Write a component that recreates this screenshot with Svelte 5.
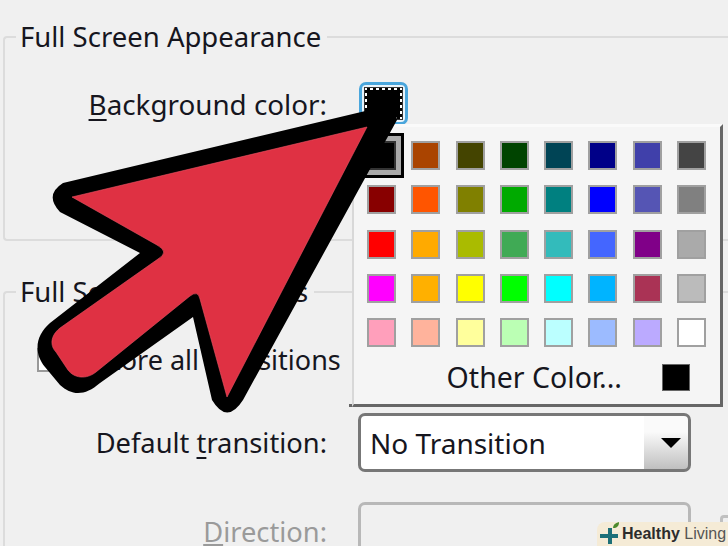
<script>
  const palette = [
    ['#000000', '#aa4400', '#444400', '#004400', '#004455', '#000088', '#4040aa', '#444444'],
    ['#880000', '#ff5500', '#808000', '#00aa00', '#008080', '#0000ff', '#5555b4', '#808080'],
    ['#ff0000', '#ffaa00', '#aabb00', '#40aa55', '#33bbbb', '#4466ff', '#800088', '#aaaaaa'],
    ['#ff00ff', '#ffb000', '#ffff00', '#00ff00', '#00ffff', '#00b4ff', '#aa3355', '#bbbbbb'],
    ['#ff9fbb', '#ffb39c', '#ffff9c', '#bbffb4', '#bbffff', '#9cbbff', '#bbaaff', '#ffffff']
  ];
</script>

<div class="page">
  <fieldset class="group first">
    <legend>Full Screen Appearance</legend>
    <div class="row">
      <span class="label bg-label"><u>B</u>ackground color:</span>
      <div class="color-btn"><div class="color-inner"></div></div>
    </div>
  </fieldset>

  <fieldset class="group second">
    <legend>Full Screen Transitions</legend>
    <div class="check-row">
      <span class="check"></span>
      <span>Restore all transitions</span>
    </div>
    <div class="row select-row">
      <span class="label default-label">Default <u>t</u>ransition:</span>
      <div class="select">
        <span class="select-text">No Transition</span>
        <span class="select-arrow"></span>
      </div>
    </div>
    <div class="row dir-row">
      <span class="label disabled"><u>D</u>irection:</span>
      <div class="input"></div>
      <div class="side-box"></div>
    </div>
  </fieldset>

  <div class="popup">
    <div class="swatches">
      {#each palette as row, r}
        {#each row as color, c}
          <div class="cell" class:selected={r === 0 && c === 0}>
            <div class="swatch" style="background:{color}"></div>
          </div>
        {/each}
      {/each}
    </div>
    <div class="other">
      <span>Other Color...</span>
      <div class="other-swatch"></div>
    </div>
  </div>

  <svg class="arrow" width="728" height="546" viewBox="0 0 728 546">
    <path fill="#000" d="M63 183 L378 108 Q396 104 397 120 L243 400 Q227 425 212 400 L193 317 L100 383 C85 396 72 396 60 385 L45 367 C33 352 36 335 50 323 L140 253 L60 212 Q44 195 63 183 Z" />
    <path fill="#df3143" stroke="#ee5566" stroke-width="0.6" d="M367 127 L72 197 L157 245 Q170 252 158 259 L60 328 C50 336 50 346 56 352 L68 370 C74 378 86 380 96 372 L190 296 Q198 290 200 299 L227 397 Z" />
  </svg>

  <div class="logo">
    <svg width="22" height="24" viewBox="0 0 22 24">
      <path fill="#1d7078" d="M1 12h8V6h4v6h6v4h-6v6H9v-6H1z" />
      <path fill="#4d8a2c" d="M14 6c0-3 2-5 6-6 0 4-2 6-6 6z" />
    </svg>
    <span class="logo-text"><b>Healthy</b> Living</span>
  </div>
</div>

<style>
  :global(body) {
    margin: 0;
    background: #f0f0f0;
  }

  .page {
    position: relative;
    width: 728px;
    height: 546px;
    overflow: hidden;
    background: #f0f0f0;
    color: #16161e;
    font-family: "Noto Sans", "Open Sans", sans-serif;
    font-size: 27px;
  }

  .group {
    margin: 0 -20px 0 3px;
    padding: 0;
    border: 0;
    border-top: 2px solid #dcdcdc;
    border-left: 2px solid #dcdcdc;
    border-bottom: 2px solid #dcdcdc;
    border-radius: 4px 0 0 4px;
    box-sizing: border-box;
  }

  .group legend {
    margin-left: 11px;
    padding: 0 6px 0 4px;
    line-height: 36px;
    font-size: 27.5px;
  }

  .first {
    height: 222px;
    margin-top: 19px;
  }

  .second {
    margin-top: 33px;
    height: 300px;
  }

  .row {
    display: grid;
    grid-template-columns: 322px auto;
    column-gap: 31px;
    align-items: center;
  }

  .label {
    text-align: right;
    line-height: 36px;
  }

  .bg-label {
    font-size: 27.8px;
  }

  .default-label {
    font-size: 27.3px;
  }

  .label u {
    text-underline-offset: 4px;
  }

  .disabled {
    color: #9a9a9a;
    font-size: 27.3px;
    line-height: 28px;
  }

  .disabled u {
    text-underline-offset: 2px;
  }

  .first .row {
    margin-top: 27px;
  }

  .color-btn {
    width: 49px;
    height: 43px;
    margin-left: 1px;
    box-sizing: border-box;
    border: 3px solid #4aa6dc;
    border-radius: 7px;
    padding: 2px;
    background: #e8f3fa;
  }

  .color-inner {
    height: 100%;
    box-sizing: border-box;
    background: #000;
    border: 3px dotted #fff;
    outline: 1px solid #333;
    outline-offset: -1px;
  }

  .check-row {
    display: flex;
    align-items: center;
    gap: 5px;
    margin: 32px 0 0 32px;
    line-height: 36px;
    white-space: nowrap;
  }

  .check {
    width: 20px;
    height: 20px;
    border: 2px solid #999;
    background: #fff;
  }

  .select-row {
    margin-top: 35px;
  }

  .select {
    display: flex;
    align-items: center;
    justify-content: space-between;
    width: 333px;
    height: 59px;
    box-sizing: border-box;
    border: 3px solid #777;
    border-radius: 7px;
    background: linear-gradient(to right, #fff 0 283px, transparent 283px),
      linear-gradient(to bottom, #fafafa 30%, #c0c0c0);
    padding-left: 9px;
    font-size: 28px;
  }

  .select-arrow {
    width: 0;
    height: 0;
    margin-right: 7px;
    border-left: 10px solid transparent;
    border-right: 10px solid transparent;
    border-top: 10px solid #000;
  }

  .dir-row {
    margin-top: 30px;
    align-items: start;
    grid-template-columns: 322px 333px auto;
  }

  .dir-row .label {
    margin-top: 16px;
  }

  .input {
    height: 60px;
    box-sizing: border-box;
    border: 3px solid #b8b8b8;
    border-radius: 7px;
  }

  .side-box {
    width: 30px;
    height: 40px;
    margin: 13px 0 0 -2px;
    box-sizing: border-box;
    border: 3px solid #c0c0c0;
    border-radius: 4px;
  }

  .popup {
    position: absolute;
    left: 352px;
    top: 124px;
    width: 371px;
    height: 283px;
    box-sizing: border-box;
    padding: 14px 0 0 13px;
    background: #f5f5f5;
    border-top: 3px solid #fafafa;
    border-left: 2px solid #d8d8d8;
    border-right: 3px solid #666;
    border-bottom: 3px solid #666;
  }

  .popup::after {
    content: "";
    position: absolute;
    left: -5px;
    bottom: -3px;
    width: 3px;
    height: 3px;
    background: #666;
  }

  .swatches {
    display: grid;
    grid-template-columns: repeat(8, 29px);
    grid-auto-rows: 29px;
    column-gap: 15.3px;
    row-gap: 15.3px;
  }

  .cell {
    position: relative;
  }

  .swatch {
    width: 100%;
    height: 100%;
    box-sizing: border-box;
    border: 2px solid #a0a0a0;
  }

  .selected::before {
    content: "";
    position: absolute;
    left: -8px;
    top: -8px;
    width: 45px;
    height: 45px;
    box-sizing: border-box;
    border: 3px solid #000;
    background: #aaa;
  }

  .selected .swatch {
    position: relative;
    border-color: #333;
  }

  .other {
    display: flex;
    justify-content: flex-end;
    align-items: center;
    gap: 40px;
    margin: 14px 30px 0 0;
    line-height: 32px;
    font-size: 28.5px;
  }

  .other-swatch {
    width: 28px;
    height: 27px;
    background: #000;
    border: 1px solid #666;
    box-sizing: border-box;
  }

  .arrow {
    position: absolute;
    left: 0;
    top: 0;
  }

  .logo {
    position: absolute;
    right: 0;
    bottom: 0;
    display: flex;
    align-items: center;
    gap: 1px;
    width: 131px;
    height: 24px;
    box-sizing: border-box;
    padding-left: 2px;
    background: #f5ebd6;
    border-radius: 8px 0 0 0;
    overflow: hidden;
  }

  .logo-text {
    font-family: "Liberation Sans", sans-serif;
    font-size: 16px;
    color: #555;
    white-space: nowrap;
  }

  .logo-text b {
    color: #2c2c2c;
  }
</style>
